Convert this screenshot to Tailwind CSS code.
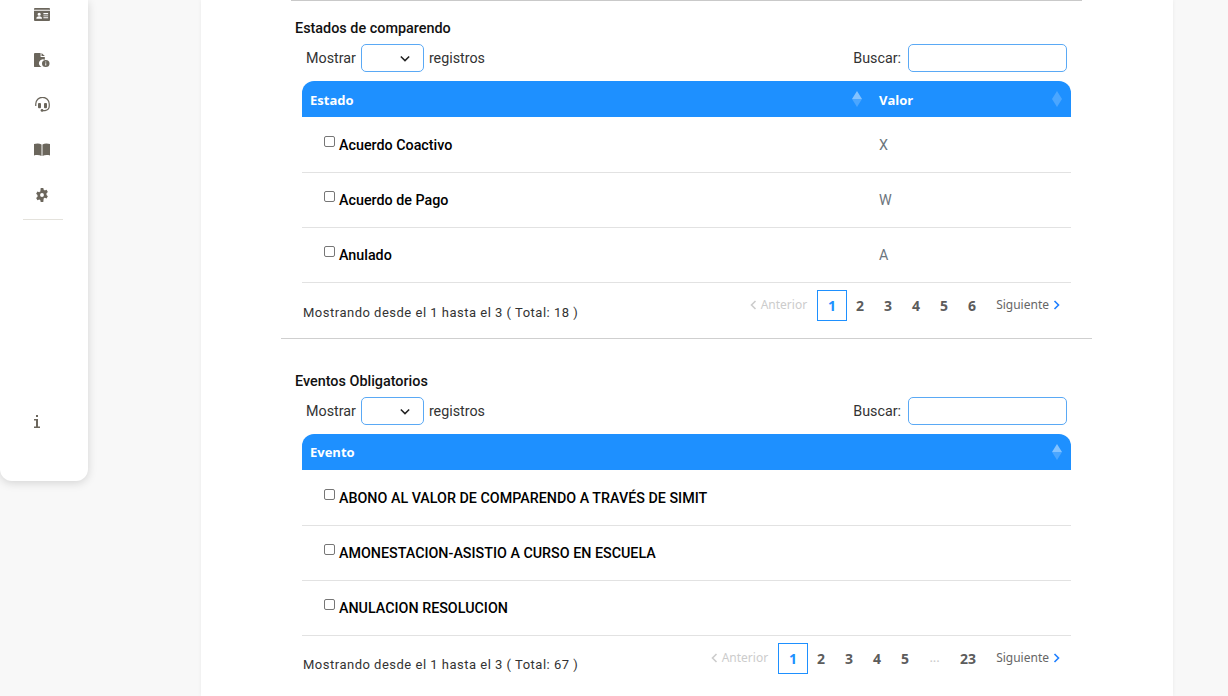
<!DOCTYPE html>
<html lang="es">
<head>
  <meta charset="UTF-8">
  <title>Parámetros</title>
  <script src="https://cdn.jsdelivr.net/npm/@tailwindcss/browser@4"></script>
</head>
<body class="bg-[#f8f8f8] h-[696px] overflow-hidden font-['Roboto',sans-serif]">
<div class="flex items-start">

  <!-- menu lateral -->
  <aside class="w-[88px] h-[481px] shrink-0 bg-white rounded-b-[12px] shadow-[0_2px_10px_rgba(0,0,0,0.15)] flex flex-col items-start text-[#6b665c]">
    <div class="ml-[23px] w-[38px] flex flex-col items-center pt-[8px]">
      <svg class="w-[16px] h-[13px] mb-[32px]" preserveAspectRatio="none" viewBox="0 1 17 14" fill="currentColor"><path fill-rule="evenodd" d="M1 1h15a1 1 0 0 1 1 1v12a1 1 0 0 1-1 1H1a1 1 0 0 1-1-1V2a1 1 0 0 1 1-1zM0 3v1h17V3zM5.500 6a1.700 1.700 0 1 0 0 3.400a1.700 1.700 0 0 0 0-3.400zM2.500 12.500h6c0-1.500-1-2.500-3-2.500s-3 1-3 2.500zM10 6.500v1.200h5V6.500zM10 9v1h5V9zM10 11v1h5v-1z"/></svg>
      <svg class="w-[16px] h-[14px] mb-[30px]" preserveAspectRatio="none" viewBox="0 0 17 16" fill="currentColor"><path d="M0 1a1 1 0 0 1 1-1h6v4.500h4.500v3.100a4.500 4.500 0 0 0-3.500 8.400H1a1 1 0 0 1-1-1z"/><path d="M8 0l3.500 3.500H8z"/><path fill-rule="evenodd" d="M12.500 8a4 4 0 1 1 0 8a4 4 0 0 1 0-8zM12 9.800v1.100h1V9.800zM12 11.700v2.500h1v-2.500z"/></svg>
      <svg class="w-[15px] h-[15px] mb-[31px]" viewBox="0 0 16 16" fill="none" stroke="currentColor"><path stroke-width="1.300" d="M.8 9.500V7.500a7.200 7.200 0 0 1 14.400 0V9.500c0 2.500-2 4.500-4.500 5H8"/><rect x="3.200" y="6.500" width="3.200" height="5.500" rx="1" fill="currentColor" stroke="none"/><rect x="9.600" y="6.500" width="3.200" height="5.500" rx="1" fill="currentColor" stroke="none"/><circle cx="7.500" cy="14.300" r="1.500" fill="currentColor" stroke="none"/></svg>
      <svg class="w-[16px] h-[13px] mb-[32px]" preserveAspectRatio="none" viewBox="0 0 17 14" fill="currentColor"><path d="M0 1.200C2.500.2 5.800.2 8 1.500V14C5.800 12.800 2.500 12.800 0 13.500z"/><path d="M17 1.200C14.500.2 11.200.2 9 1.500V14c2.200-1.200 5.500-1.200 8-.5z"/></svg>
      <svg class="w-[14px] h-[14px]" viewBox="0 0 16 16" fill="currentColor"><path fill-rule="evenodd" d="M6.500 0h3l.4 2.100c.5.200.9.400 1.300.7l2-.7 1.500 2.600-1.600 1.400a5 5 0 0 1 0 1.800l1.600 1.400-1.500 2.600-2-.7c-.4.300-.8.500-1.300.7L9.500 16h-3l-.4-2.100a5 5 0 0 1-1.300-.7l-2 .7-1.500-2.600 1.600-1.400a5 5 0 0 1 0-1.800L1.300 6.700l1.500-2.600 2 .7c.4-.3.800-.5 1.300-.7zM8 5.800a2.200 2.200 0 1 0 0 4.400a2.200 2.200 0 0 0 0-4.400z"/></svg>
    </div>
    <div class="ml-[23px] w-[40px] border-t border-[#e4e2dc] mt-[17px]"></div>
    <svg class="w-[6px] h-[13px] mt-[195px] ml-[34px]" viewBox="0 0 6 13" fill="currentColor"><rect x="2" y="0" width="2" height="2"/><path d="M0 4h4v7.500h2V13H0v-1.500h2V5.500H0z"/></svg>
  </aside>

  <main class="ml-[113px] w-[972px] h-[696px] shrink-0 bg-white shadow-[0_0_4px_rgba(0,0,0,0.06)]">
    <div class="ml-[80px] w-[811px]">

      <!-- Estados de comparendo -->
      <div class="mx-[10px] border-t border-[#c9c9c9]"></div>
      <section class="h-[338px] pt-[20px] border-b border-[#cfcfcf]">
        <h2 class="ml-[14px] text-[14.4px] leading-[16px] font-medium text-[#111]">Estados de comparendo</h2>
        <div class="ml-[25px] w-[761px] mt-[7px] flex items-center justify-between text-[14.3px] text-[#333]">
          <div class="flex items-center">
            <span class="pt-[2px]">Mostrar</span>
            <div class="w-[63px] h-[28px] mx-[5px] border border-[#5aa9f5] rounded-[5px] flex items-center justify-end pr-[13px]">
              <svg class="w-[10px] h-[7px]" viewBox="0 0 12 8" fill="none" stroke="#222" stroke-width="1.800"><path d="M1 1.500l5 5 5-5"/></svg>
            </div>
            <span class="pt-[2px]">registros</span>
          </div>
          <div class="flex items-center">
            <span class="mr-[7px] pt-[2px]">Buscar:</span>
            <input class="w-[159px] h-[28px] border border-[#5aa9f5] rounded-[5px] bg-white">
          </div>
        </div>
        <table class="ml-[21px] w-[769px] mt-[9px] table-fixed border-collapse">
          <thead>
            <tr class="h-[36px] bg-[#1e90ff] text-white text-[13px] font-['Open_Sans',sans-serif] font-extrabold text-left">
              <th class="w-[569px] px-[8px] pt-[4px] rounded-tl-[12px] relative">Estado
                <span class="absolute right-[9px] top-[10px] flex flex-col items-center">
                  <span class="w-0 h-0 border-x-[5px] border-x-transparent border-b-[8px] border-b-white/45"></span>
                  <span class="w-0 h-0 border-x-[5px] border-x-transparent border-t-[8px] border-t-white/20"></span>
                </span>
              </th>
              <th class="px-[8px] pt-[4px] rounded-tr-[12px] relative">Valor
                <span class="absolute right-[9px] top-[10px] flex flex-col items-center">
                  <span class="w-0 h-0 border-x-[5px] border-x-transparent border-b-[8px] border-b-white/20"></span>
                  <span class="w-0 h-0 border-x-[5px] border-x-transparent border-t-[8px] border-t-white/20"></span>
                </span>
              </th>
            </tr>
          </thead>
          <tbody class="text-[14.3px]">
            <tr class="h-[55px] border-b border-[#e2e2e2]">
              <td class="pl-[22px] pt-[2px] font-medium text-black"><input type="checkbox" class="appearance-none w-[11px] h-[11px] border border-[#767676] rounded-[2px] mr-[4px] relative -top-[3px]">Acuerdo Coactivo</td>
              <td class="px-[8px] pt-[2px] text-[#6c757d]">X</td>
            </tr>
            <tr class="h-[55px] border-b border-[#e2e2e2]">
              <td class="pl-[22px] pt-[2px] font-medium text-black"><input type="checkbox" class="appearance-none w-[11px] h-[11px] border border-[#767676] rounded-[2px] mr-[4px] relative -top-[3px]">Acuerdo de Pago</td>
              <td class="px-[8px] pt-[2px] text-[#6c757d]">W</td>
            </tr>
            <tr class="h-[55px] border-b border-[#e2e2e2]">
              <td class="pl-[22px] pt-[2px] font-medium text-black"><input type="checkbox" class="appearance-none w-[11px] h-[11px] border border-[#767676] rounded-[2px] mr-[4px] relative -top-[3px]">Anulado</td>
              <td class="px-[8px] pt-[2px] text-[#6c757d]">A</td>
            </tr>
          </tbody>
        </table>
        <div class="ml-[22px] w-[769px] flex items-start justify-between">
          <p class="mt-[22px] text-[13px] leading-[16px] tracking-[0.5px] text-[#333]">Mostrando desde el 1 hasta el 3 ( Total: 18 )</p>
          <nav class="mt-[7px] mr-[12px] h-[31px] flex items-center font-['Noto_Sans',sans-serif] text-[12px]">
            <span class="text-[#ccc] flex items-center gap-[4px] mr-[10px]"><svg class="w-[7px] h-[10px]" viewBox="0 0 7 10" fill="none" stroke="#ccc" stroke-width="1.600"><path d="M5.500 1l-4 4 4 4"/></svg>Anterior</span>
            <span class="w-[30px] h-[31px] -mr-[1px] border border-[#1e90ff] text-[#1e90ff] font-bold text-[14px] flex items-center justify-center">1</span>
            <span class="w-[28px] text-center font-bold text-[14px] text-[#5c5c5c]">2</span>
            <span class="w-[28px] text-center font-bold text-[14px] text-[#5c5c5c]">3</span>
            <span class="w-[28px] text-center font-bold text-[14px] text-[#5c5c5c]">4</span>
            <span class="w-[28px] text-center font-bold text-[14px] text-[#5c5c5c]">5</span>
            <span class="w-[28px] text-center font-bold text-[14px] text-[#5c5c5c]">6</span>
            <span class="ml-[10px] text-[#666] flex items-center gap-[4px]">Siguiente<svg class="w-[7px] h-[10px]" viewBox="0 0 7 10" fill="none" stroke="#1e7fff" stroke-width="1.600"><path d="M1.500 1l4 4-4 4"/></svg></span>
          </nav>
        </div>
      </section>

      <!-- Eventos Obligatorios -->
      <section class="pt-[35px]">
        <h2 class="ml-[14px] text-[14.4px] leading-[16px] font-medium text-[#111]">Eventos Obligatorios</h2>
        <div class="ml-[25px] w-[761px] mt-[7px] flex items-center justify-between text-[14.3px] text-[#333]">
          <div class="flex items-center">
            <span class="pt-[2px]">Mostrar</span>
            <div class="w-[63px] h-[28px] mx-[5px] border border-[#5aa9f5] rounded-[5px] flex items-center justify-end pr-[13px]">
              <svg class="w-[10px] h-[7px]" viewBox="0 0 12 8" fill="none" stroke="#222" stroke-width="1.800"><path d="M1 1.500l5 5 5-5"/></svg>
            </div>
            <span class="pt-[2px]">registros</span>
          </div>
          <div class="flex items-center">
            <span class="mr-[7px] pt-[2px]">Buscar:</span>
            <input class="w-[159px] h-[28px] border border-[#5aa9f5] rounded-[5px] bg-white">
          </div>
        </div>
        <table class="ml-[21px] w-[769px] mt-[9px] table-fixed border-collapse">
          <thead>
            <tr class="h-[36px] bg-[#1e90ff] text-white text-[13px] font-['Open_Sans',sans-serif] font-extrabold text-left">
              <th class="px-[8px] pt-[1px] rounded-t-[12px] relative">Evento
                <span class="absolute right-[9px] top-[10px] flex flex-col items-center">
                  <span class="w-0 h-0 border-x-[5px] border-x-transparent border-b-[8px] border-b-white/45"></span>
                  <span class="w-0 h-0 border-x-[5px] border-x-transparent border-t-[8px] border-t-white/20"></span>
                </span>
              </th>
            </tr>
          </thead>
          <tbody class="text-[14.3px]">
            <tr class="h-[55px] border-b border-[#e2e2e2]">
              <td class="pl-[22px] pt-[2px] font-medium text-black"><input type="checkbox" class="appearance-none w-[11px] h-[11px] border border-[#767676] rounded-[2px] mr-[4px] relative -top-[3px]">ABONO AL VALOR DE COMPARENDO A TRAVÉS DE SIMIT</td>
            </tr>
            <tr class="h-[55px] border-b border-[#e2e2e2]">
              <td class="pl-[22px] pt-[2px] font-medium text-black"><input type="checkbox" class="appearance-none w-[11px] h-[11px] border border-[#767676] rounded-[2px] mr-[4px] relative -top-[3px]">AMONESTACION-ASISTIO A CURSO EN ESCUELA</td>
            </tr>
            <tr class="h-[55px] border-b border-[#e2e2e2]">
              <td class="pl-[22px] pt-[2px] font-medium text-black"><input type="checkbox" class="appearance-none w-[11px] h-[11px] border border-[#767676] rounded-[2px] mr-[4px] relative -top-[3px]">ANULACION RESOLUCION</td>
            </tr>
          </tbody>
        </table>
        <div class="ml-[22px] w-[769px] flex items-start justify-between">
          <p class="mt-[21px] text-[13px] leading-[16px] tracking-[0.5px] text-[#333]">Mostrando desde el 1 hasta el 3 ( Total: 67 )</p>
          <nav class="mt-[7px] mr-[12px] h-[31px] flex items-center font-['Noto_Sans',sans-serif] text-[12px]">
            <span class="text-[#ccc] flex items-center gap-[4px] mr-[10px]"><svg class="w-[7px] h-[10px]" viewBox="0 0 7 10" fill="none" stroke="#ccc" stroke-width="1.600"><path d="M5.500 1l-4 4 4 4"/></svg>Anterior</span>
            <span class="w-[30px] h-[31px] -mr-[1px] border border-[#1e90ff] text-[#1e90ff] font-bold text-[14px] flex items-center justify-center">1</span>
            <span class="w-[28px] text-center font-bold text-[14px] text-[#5c5c5c]">2</span>
            <span class="w-[28px] text-center font-bold text-[14px] text-[#5c5c5c]">3</span>
            <span class="w-[28px] text-center font-bold text-[14px] text-[#5c5c5c]">4</span>
            <span class="w-[28px] text-center font-bold text-[14px] text-[#5c5c5c]">5</span>
            <span class="w-[31px] text-center text-[13px] text-[#ccc]">...</span>
            <span class="w-[36px] text-center font-bold text-[14px] text-[#5c5c5c]">23</span>
            <span class="ml-[10px] text-[#666] flex items-center gap-[4px]">Siguiente<svg class="w-[7px] h-[10px]" viewBox="0 0 7 10" fill="none" stroke="#1e7fff" stroke-width="1.600"><path d="M1.500 1l4 4-4 4"/></svg></span>
          </nav>
        </div>
      </section>

    </div>
  </main>
</div>
</body>
</html>
